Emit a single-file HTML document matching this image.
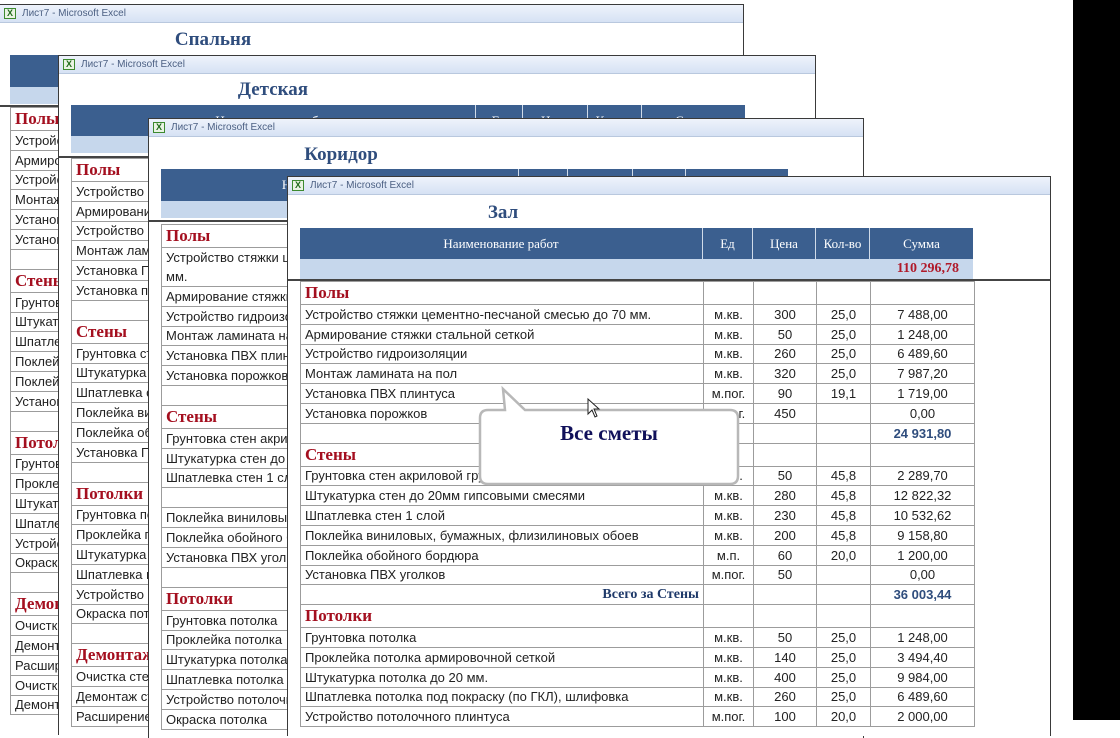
<!DOCTYPE html>
<html><head><meta charset="utf-8">
<style>
*{margin:0;padding:0;box-sizing:border-box}
body{width:1120px;height:720px;overflow:hidden;background:#fff;position:relative;font-family:"Liberation Sans",sans-serif}
.win{position:absolute;background:#fff;border-left:1px solid #3a3a3a;border-right:1px solid #3a3a3a;border-top:1px solid #3a3a3a;overflow:hidden}
.tb{position:absolute;left:0;right:0;top:0;height:18px;background:linear-gradient(#eef3fb,#d6e2f4);border-bottom:1px solid #b9c8de;font-size:10px;color:#4b5f82;line-height:17px;padding-left:22px;white-space:nowrap}
.ic{position:absolute;left:4px;top:3px;width:12px;height:11px;background:#e9f3e3;border:1px solid #3d8a2f;font:bold 9px/9px "Liberation Sans",sans-serif;color:#1f6a1a;text-align:center}
.ttl{position:absolute;font:bold 19px "Liberation Serif",serif;color:#2f4d7d;transform:translateX(-50%);white-space:nowrap}
.hd{position:absolute;background:#3b5f8f;display:flex}
.hd div{border-right:1px solid #d0dbe9;color:#fff;font:13px "Liberation Serif",serif;display:flex;align-items:center;justify-content:center;white-space:nowrap;overflow:hidden}
.lt{position:absolute;background:#c6d7ec}
.ln{position:absolute;left:0;right:0;height:2px;background:#444}
table{position:absolute;border-collapse:collapse;table-layout:fixed}
td{border:1px solid #9c9c9c;font-size:13px;color:#222;white-space:nowrap;overflow:hidden;padding:0 4px;height:19.8px;line-height:17px}
tr.s td{height:23px}
tr.s td:first-child{font:bold 17px "Liberation Serif",serif;color:#a40f1f}
tr.e td{height:20px}
td.c{text-align:center}
td.r{text-align:right;font-weight:bold;font-family:"Liberation Serif",serif;color:#1f3a6a;font-size:14px}
td.t{text-align:center;color:#2f4d7d;font-weight:bold}
</style></head><body>

<!-- Спальня -->
<div class="win" style="left:0;top:4px;width:744px;height:720px;border-left:none">
<div class="tb"><span class="ic">X</span>Лист7 - Microsoft Excel</div>
<div class="ttl" style="left:213px;top:24px">Спальня</div>
<div class="hd" style="left:10px;top:50px;width:720px;height:32px"></div>
<div class="lt" style="left:10px;top:82px;width:720px;height:17px"></div>
<div class="ln" style="top:100px"></div>
<table style="left:10px;top:102px;width:400px">
<tr class="s"><td>Полы</td></tr>
<tr><td>Устройство стяжки</td></tr><tr><td>Армирование стяжки</td></tr><tr><td>Устройство гидро</td></tr><tr><td>Монтаж ламината</td></tr><tr><td>Установка ПВХ</td></tr><tr><td>Установка порожков</td></tr>
<tr class="e"><td></td></tr>
<tr class="s"><td>Стены</td></tr>
<tr><td>Грунтовка стен</td></tr><tr><td>Штукатурка стен</td></tr><tr><td>Шпатлевка стен</td></tr><tr><td>Поклейка виниловых</td></tr><tr><td>Поклейка обойного</td></tr><tr><td>Установка ПВХ</td></tr>
<tr class="e"><td></td></tr>
<tr class="s"><td>Потолки</td></tr>
<tr><td>Грунтовка потолка</td></tr><tr><td>Проклейка потолка</td></tr><tr><td>Штукатурка потолка</td></tr><tr><td>Шпатлевка потолка</td></tr><tr><td>Устройство потолочного</td></tr><tr><td>Окраска потолка</td></tr>
<tr class="e"><td></td></tr>
<tr class="s"><td>Демонтаж</td></tr>
<tr><td>Очистка стен</td></tr><tr><td>Демонтаж стяжки</td></tr><tr><td>Расширение</td></tr><tr><td>Очистка пола</td></tr><tr><td>Демонтаж плитки</td></tr>
</table>
</div>

<!-- Детская -->
<div class="win" style="left:58px;top:55px;width:758px;height:680px">
<div class="tb"><span class="ic">X</span>Лист7 - Microsoft Excel</div>
<div class="ttl" style="left:214px;top:23px">Детская</div>
<div class="hd" style="left:12px;top:49px;width:674px;height:31px"><div style="width:405px">Наименование работ</div><div style="width:47px">Ед</div><div style="width:65px">Цена</div><div style="width:54px">Кол-во</div><div style="width:103px;border:none">Сумма</div></div>
<div class="lt" style="left:12px;top:80px;width:674px;height:17px"></div>
<div class="ln" style="top:100px"></div>
<table style="left:12px;top:102px;width:400px">
<tr class="s"><td>Полы</td></tr>
<tr><td>Устройство стяжки</td></tr><tr><td>Армирование стяжки</td></tr><tr><td>Устройство гидро</td></tr><tr><td>Монтаж ламината</td></tr><tr><td>Установка ПВХ плинтуса</td></tr><tr><td>Установка порожков</td></tr>
<tr class="e"><td></td></tr>
<tr class="s"><td>Стены</td></tr>
<tr><td>Грунтовка стен</td></tr><tr><td>Штукатурка стен</td></tr><tr><td>Шпатлевка стен</td></tr><tr><td>Поклейка виниловых</td></tr><tr><td>Поклейка обойного</td></tr><tr><td>Установка ПВХ</td></tr>
<tr class="e"><td></td></tr>
<tr class="s"><td>Потолки</td></tr>
<tr><td>Грунтовка потолка</td></tr><tr><td>Проклейка потолка</td></tr><tr><td>Штукатурка потолка</td></tr><tr><td>Шпатлевка потолка</td></tr><tr><td>Устройство потолочного</td></tr><tr><td>Окраска потолка</td></tr>
<tr class="e"><td></td></tr>
<tr class="s"><td>Демонтаж</td></tr>
<tr><td>Очистка стен</td></tr><tr><td>Демонтаж стяжки</td></tr><tr><td>Расширение</td></tr>
</table>
</div>

<!-- Коридор -->
<div class="win" style="left:148px;top:118px;width:716px;height:620px">
<div class="tb"><span class="ic">X</span>Лист7 - Microsoft Excel</div>
<div class="ttl" style="left:192px;top:25px">Коридор</div>
<div class="hd" style="left:12px;top:50px;width:627px;height:32px"><div style="width:358px">Наименование работ</div><div style="width:49px">Ед</div><div style="width:65px">Цена</div><div style="width:53px">Кол-во</div><div style="width:102px;border:none">Сумма</div></div>
<div class="lt" style="left:12px;top:82px;width:627px;height:17px"></div>
<div class="ln" style="top:101px"></div>
<table style="left:12px;top:105px;width:400px">
<tr class="s"><td>Полы</td></tr>
<tr><td style="height:39px;line-height:19px">Устройство стяжки цементно-песчаной<br>мм.</td></tr>
<tr><td>Армирование стяжки стальной</td></tr><tr><td>Устройство гидроизоляции</td></tr><tr><td>Монтаж ламината на пол</td></tr><tr><td>Установка ПВХ плинтуса</td></tr><tr><td>Установка порожков</td></tr>
<tr class="e"><td></td></tr>
<tr class="s"><td>Стены</td></tr>
<tr><td>Грунтовка стен акриловой</td></tr><tr><td>Штукатурка стен до 20мм</td></tr><tr><td>Шпатлевка стен 1 слой</td></tr>
<tr class="e"><td></td></tr>
<tr><td>Поклейка виниловых обоев</td></tr><tr><td>Поклейка обойного бордюра</td></tr><tr><td>Установка ПВХ уголков</td></tr>
<tr class="e"><td></td></tr>
<tr class="s"><td>Потолки</td></tr>
<tr><td>Грунтовка потолка</td></tr><tr><td>Проклейка потолка</td></tr><tr><td>Штукатурка потолка</td></tr><tr><td>Шпатлевка потолка</td></tr><tr><td>Устройство потолочного</td></tr><tr><td>Окраска потолка</td></tr>
</table>
</div>

<!-- Зал -->
<div class="win" style="left:287px;top:176px;width:764px;height:560px">
<div class="tb"><span class="ic">X</span>Лист7 - Microsoft Excel</div>
<div class="ttl" style="left:215px;top:25px">Зал</div>
<div class="hd" style="left:12px;top:51px;width:673px;height:31px"><div style="width:403px">Наименование работ</div><div style="width:50px">Ед</div><div style="width:63px">Цена</div><div style="width:54px">Кол-во</div><div style="width:103px;border:none">Сумма</div></div>
<div class="lt" style="left:12px;top:82px;width:673px;height:20px;text-align:right;padding-right:14px;font:bold 14px/20px 'Liberation Serif',serif;color:#b01a2a">110 296,78</div>
<div class="ln" style="top:102px"></div>
<table style="left:12px;top:104px;width:674px">
<colgroup><col style="width:403px"><col style="width:50px"><col style="width:63px"><col style="width:54px"><col style="width:104px"></colgroup>
<tr class="s"><td>Полы</td><td></td><td></td><td></td><td></td></tr>
<tr><td>Устройство стяжки цементно-песчаной смесью до 70 мм.</td><td class="c">м.кв.</td><td class="c">300</td><td class="c">25,0</td><td class="c">7 488,00</td></tr>
<tr><td>Армирование стяжки стальной сеткой</td><td class="c">м.кв.</td><td class="c">50</td><td class="c">25,0</td><td class="c">1 248,00</td></tr>
<tr><td>Устройство гидроизоляции</td><td class="c">м.кв.</td><td class="c">260</td><td class="c">25,0</td><td class="c">6 489,60</td></tr>
<tr><td>Монтаж ламината на пол</td><td class="c">м.кв.</td><td class="c">320</td><td class="c">25,0</td><td class="c">7 987,20</td></tr>
<tr><td>Установка ПВХ плинтуса</td><td class="c">м.пог.</td><td class="c">90</td><td class="c">19,1</td><td class="c">1 719,00</td></tr>
<tr><td>Установка порожков</td><td class="c">м.пог.</td><td class="c">450</td><td class="c"></td><td class="c">0,00</td></tr>
<tr><td class="r">Всего за Полы</td><td></td><td></td><td></td><td class="t">24 931,80</td></tr>
<tr class="s"><td>Стены</td><td></td><td></td><td></td><td></td></tr>
<tr><td>Грунтовка стен акриловой грунтовкой</td><td class="c">м.кв.</td><td class="c">50</td><td class="c">45,8</td><td class="c">2 289,70</td></tr>
<tr><td>Штукатурка стен до 20мм гипсовыми смесями</td><td class="c">м.кв.</td><td class="c">280</td><td class="c">45,8</td><td class="c">12 822,32</td></tr>
<tr><td>Шпатлевка стен 1 слой</td><td class="c">м.кв.</td><td class="c">230</td><td class="c">45,8</td><td class="c">10 532,62</td></tr>
<tr><td>Поклейка виниловых, бумажных, флизилиновых обоев</td><td class="c">м.кв.</td><td class="c">200</td><td class="c">45,8</td><td class="c">9 158,80</td></tr>
<tr><td>Поклейка обойного бордюра</td><td class="c">м.п.</td><td class="c">60</td><td class="c">20,0</td><td class="c">1 200,00</td></tr>
<tr><td>Установка ПВХ уголков</td><td class="c">м.пог.</td><td class="c">50</td><td class="c"></td><td class="c">0,00</td></tr>
<tr><td class="r">Всего за Стены</td><td></td><td></td><td></td><td class="t">36 003,44</td></tr>
<tr class="s"><td>Потолки</td><td></td><td></td><td></td><td></td></tr>
<tr><td>Грунтовка потолка</td><td class="c">м.кв.</td><td class="c">50</td><td class="c">25,0</td><td class="c">1 248,00</td></tr>
<tr><td>Проклейка потолка армировочной сеткой</td><td class="c">м.кв.</td><td class="c">140</td><td class="c">25,0</td><td class="c">3 494,40</td></tr>
<tr><td>Штукатурка потолка до 20 мм.</td><td class="c">м.кв.</td><td class="c">400</td><td class="c">25,0</td><td class="c">9 984,00</td></tr>
<tr><td>Шпатлевка потолка под покраску (по ГКЛ), шлифовка</td><td class="c">м.кв.</td><td class="c">260</td><td class="c">25,0</td><td class="c">6 489,60</td></tr>
<tr><td>Устройство потолочного плинтуса</td><td class="c">м.пог.</td><td class="c">100</td><td class="c">20,0</td><td class="c">2 000,00</td></tr>
</table>
</div>

<!-- Callout -->
<svg style="position:absolute;left:0;top:0" width="1120" height="720">
<path d="M488,410 L505,410 L503,389 L525,410 L730,410 Q738,410 738,418 L738,476 Q738,484 730,484 L488,484 Q480,484 480,476 L480,418 Q480,410 488,410 Z" fill="#fff" stroke="#b8b8b8" stroke-width="2.5"/>
<path d="M588,399 L588,414 L592,410 L595,417 L597,416 L594,409 L599,409 Z" fill="#fff" stroke="#222" stroke-width="1"/>
</svg>
<div style="position:absolute;left:480px;top:421px;width:258px;text-align:center;font:bold 21px 'Liberation Serif',serif;color:#10105a">Все сметы</div>

<div style="position:absolute;left:1073px;top:0;width:47px;height:720px;background:#000"></div>
</body></html>
